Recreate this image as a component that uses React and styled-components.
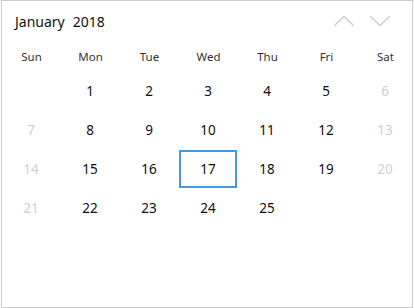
import React from "react";
import styled, { createGlobalStyle } from "styled-components";

const GlobalStyle = createGlobalStyle`
  body {
    margin: 0;
    background: #ffffff;
    font-family: "Noto Sans", "Open Sans", sans-serif;
  }
`;

const DAYS = ["Sun", "Mon", "Tue", "Wed", "Thu", "Fri", "Sat"];

const WEEKS = [
  [null, 1, 2, 3, 4, 5, 6],
  [7, 8, 9, 10, 11, 12, 13],
  [14, 15, 16, 17, 18, 19, 20],
  [21, 22, 23, 24, 25, null, null],
];

const Chevron = ({ up }) => (
  <svg width="22" height="12" viewBox="0 0 22 12">
    <path
      d={up ? "M1 11 L11 1.5 L21 11" : "M1 1 L11 10.5 L21 1"}
      fill="none"
      stroke="#cfcfcf"
      strokeWidth="1.5"
    />
  </svg>
);

const App = () => {
  return (
    <>
      <GlobalStyle />
      <Frame>
        <Header>
          <Title>
            January<Year>2018</Year>
          </Title>
          <NavGroup>
            <NavButton>
              <Chevron up />
            </NavButton>
            <NavButton>
              <Chevron />
            </NavButton>
          </NavGroup>
        </Header>
        <Grid>
          {DAYS.map((d) => (
            <DayName key={d}>{d}</DayName>
          ))}
          {WEEKS.map((week, wi) =>
            week.map((n, di) => (
              <Cell
                key={wi + "-" + di}
                $muted={di === 0 || di === 6}
                $selected={n === 17}
              >
                {n}
              </Cell>
            ))
          )}
        </Grid>
      </Frame>
    </>
  );
};

const Frame = styled.div`
  box-sizing: border-box;
  margin-left: 1px;
  width: 412px;
  height: 308px;
  border: 1px solid #cccccc;
  background: #ffffff;
  overflow: hidden;
`;

const Header = styled.div`
  display: flex;
  align-items: center;
  justify-content: space-between;
  height: 40px;
  padding: 0 21px 0 13px;
`;

const Title = styled.div`
  font-size: 14px;
  color: #111;
`;

const Year = styled.span`
  margin-left: 8px;
`;

const NavGroup = styled.div`
  display: flex;
  gap: 14px;
`;

const NavButton = styled.div`
  display: flex;
  align-items: center;
  justify-content: center;
  width: 22px;
  height: 12px;
`;

const Grid = styled.div`
  display: grid;
  width: 413px;
  grid-template-columns: repeat(7, 59px);
  grid-template-rows: 30px repeat(4, 39px);
`;

const DayName = styled.div`
  display: flex;
  align-items: center;
  justify-content: center;
  font-size: 11.5px;
  color: #333;
`;

const Cell = styled.div`
  box-sizing: border-box;
  display: flex;
  align-items: center;
  justify-content: center;
  font-size: 13.5px;
  margin: 1px 1px 0 0;
  color: ${(p) => (p.$muted ? "#cfcfcf" : "#111")};
  border: 2px solid ${(p) => (p.$selected ? "#4299e1" : "transparent")};
`;

export default App;
